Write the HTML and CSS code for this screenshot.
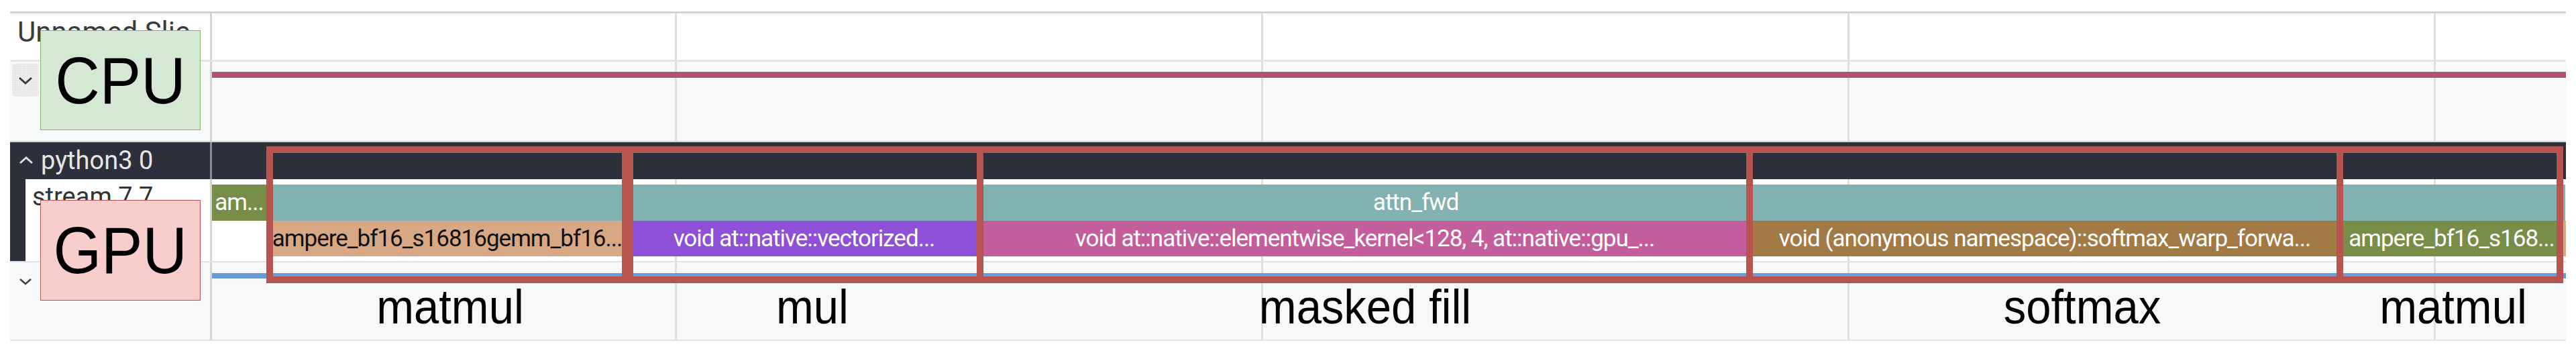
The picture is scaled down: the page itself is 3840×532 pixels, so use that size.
FILE: index.html
```html
<!DOCTYPE html>
<html lang="en">
<head>
<meta charset="utf-8">
<title>Trace</title>
<link rel="stylesheet" href="styles.css">
</head>
<body>
<div class="panel">
  <div class="row row-a">
    <div class="shell"><span class="title">Unnamed Slic</span></div>
    <div class="content grid"></div>
  </div>
  <div class="row row-b">
    <div class="shell">
      <button class="chev-btn" type="button">
        <svg width="22" height="12" viewBox="0 0 22 12"><polyline points="2,2 11,10 20,2" fill="none" stroke="#3a3a3a" stroke-width="3"/></svg>
      </button>
    </div>
    <div class="content grid"><div class="cpu-line"></div></div>
  </div>
  <div class="row row-c">
    <div class="shell">
      <svg class="chev-up" width="22" height="12" viewBox="0 0 22 12"><polyline points="2,10 11,2 20,10" fill="none" stroke="#dcdcdc" stroke-width="3"/></svg>
      <span class="group-title">python3 0</span>
    </div>
    <div class="content"></div>
  </div>
  <div class="row row-d">
    <div class="shell"><div class="indent"></div><span class="track-title">stream 7 7</span></div>
    <div class="content grid">
      <div class="slices">
        <div class="slice s-green" style="width:81px">am...</div>
        <div class="slice s-teal" style="width:3427px">attn_fwd</div>
      </div>
      <div class="slices">
        <div class="gap" style="width:81px"></div>
        <div class="slice s-peach" style="width:539px">ampere_bf16_s16816gemm_bf16...</div>
        <div class="slice s-purple" style="width:525px">void at::native::vectorized...</div>
        <div class="slice s-pink" style="width:1147px">void at::native::elementwise_kernel&lt;128, 4, at::native::gpu_...</div>
        <div class="slice s-brown" style="width:880px">void (anonymous namespace)::softmax_warp_forwa...</div>
        <div class="slice s-green" style="width:333px">ampere_bf16_s168...</div>
        <div class="slice s-peach" style="width:4px"></div>
      </div>
    </div>
  </div>
  <div class="row row-e">
    <div class="shell">
      <svg class="chev-down" width="20" height="11" viewBox="0 0 20 11"><polyline points="2,2 10,9 18,2" fill="none" stroke="#444" stroke-width="2.6"/></svg>
    </div>
    <div class="content grid"><div class="gpu-line"></div></div>
  </div>

  <div class="note note-cpu"><span>CPU</span></div>
  <div class="note note-gpu"><span>GPU</span></div>

  <div class="box" style="left:382px;width:540px"></div>
  <div class="box" style="left:919px;width:532px"></div>
  <div class="box" style="left:1441px;width:1157px"></div>
  <div class="box" style="left:2588px;width:890px"></div>
  <div class="box" style="left:3468px;width:338px"></div>

  <div class="label" style="left:656px">matmul</div>
  <div class="label" style="left:1196px">mul</div>
  <div class="label" style="left:2020px">masked fill</div>
  <div class="label" style="left:3089px">softmax</div>
  <div class="label" style="left:3642px">matmul</div>
</div>
</body>
</html>
```

FILE: styles.css
```css
* { box-sizing: border-box; }

body {
  margin: 0;
  background: #ffffff;
  font-family: Roboto, "Liberation Sans", sans-serif;
}

.panel {
  position: relative;
  width: 3810px;
  margin: 17px 0 0 15px;
}

.row {
  display: flex;
}

.shell {
  width: 298px;
  flex: none;
  display: flex;
  overflow: hidden;
}

.content {
  flex: 1;
  border-left: 3px solid #d4d4d4;
}

.grid {
  background-image: repeating-linear-gradient(90deg, transparent 0 690px, #dedede 690px 693px, transparent 693px 874px);
}

/* Row A */
.row-a {
  height: 75px;
  border-top: 3px solid #d2d2d2;
  border-bottom: 3px solid #e4e4e4;
  background: #ffffff;
}
.title {
  padding: 3px 0 0 11px;
  font-size: 42px;
  line-height: 49px;
  color: #3a3a3a;
  white-space: nowrap;
}

/* Row B */
.row-b {
  height: 120px;
  background: #f6f8f9;
  border-bottom: 2px solid #d3d3d3;
}
.chev-btn {
  margin: 3px 0 0 3px;
  width: 40px;
  height: 49px;
  border: none;
  border-radius: 5px;
  padding: 0;
  display: flex;
  align-items: center;
  justify-content: center;
  background-color: #ececec;
  background-image: radial-gradient(#dadada 0.8px, transparent 1px);
  background-size: 3px 3px;
}
.cpu-line {
  margin-top: 15px;
  height: 9px;
  background: #ad5470;
}

/* Row C */
.row-c {
  height: 55px;
  background: #2b303b;
}
.row-c .content { border-left-color: #8a8d93; }
.row-c .shell { padding-left: 13px; }
.chev-up { margin-top: 21px; flex: none; }
.group-title {
  margin-left: 11px;
  font-size: 38px;
  line-height: 55px;
  color: #e6e6e6;
  white-space: nowrap;
}

/* Row D */
.row-d {
  height: 124px;
  border-bottom: 2px solid #e2e2e2;
  background: #ffffff;
}
.indent {
  width: 23px;
  flex: none;
  background: #2b303b;
}
.track-title {
  padding: 4px 0 0 10px;
  font-size: 38px;
  line-height: 45px;
  color: #333333;
  white-space: nowrap;
}
.row-d .content { padding-top: 8px; }
.slices {
  display: flex;
  height: 54px;
}
.slices + .slices { height: 53px; }
.slice {
  flex: none;
  overflow: hidden;
  white-space: nowrap;
  text-align: center;
  font-size: 35px;
  letter-spacing: -1px;
  line-height: 54px;
  color: #ffffff;
}
.slices + .slices .slice { line-height: 53px; }
.gap { flex: none; }
.s-green { background: #788d47; }
.s-teal { background: #81b1b0; }
.s-peach { background: #d8a784; color: #111111; }
.s-purple { background: #8e50d6; }
.s-pink { background: #c45d9b; }
.s-brown { background: #a27a45; }

/* Row E */
.row-e {
  height: 117px;
  background: #f6f8f9;
  border-bottom: 2px solid #e2e2e2;
}
.row-e .shell { padding-left: 13px; }
.chev-down { margin-top: 23px; }
.gpu-line {
  margin-top: 16px;
  height: 8px;
  background: #6a9bd4;
}

/* Annotation overlays */
.note {
  position: absolute;
  left: 45px;
  width: 239px;
  display: flex;
  align-items: center;
  justify-content: center;
  font-family: "Liberation Sans", Arial, sans-serif;
  font-size: 99px;
  color: #000000;
}
.note span { display: inline-block; transform: scaleX(0.93); }
.note-cpu {
  top: 28px;
  height: 149px;
  background: #d5e8d4;
  border: 1.5px solid #82b366;
}
.note-gpu {
  top: 281px;
  height: 150px;
  background: #f8cecc;
  border: 1.5px solid #b85450;
}

.box {
  position: absolute;
  top: 201px;
  height: 204px;
  border: 10px solid #b85450;
}

.label {
  position: absolute;
  top: 404px;
  font-family: "Liberation Sans", Arial, sans-serif;
  font-size: 72px;
  line-height: 72px;
  color: #000000;
  white-space: nowrap;
  transform: translateX(-50%) scaleX(0.93);
}
```
